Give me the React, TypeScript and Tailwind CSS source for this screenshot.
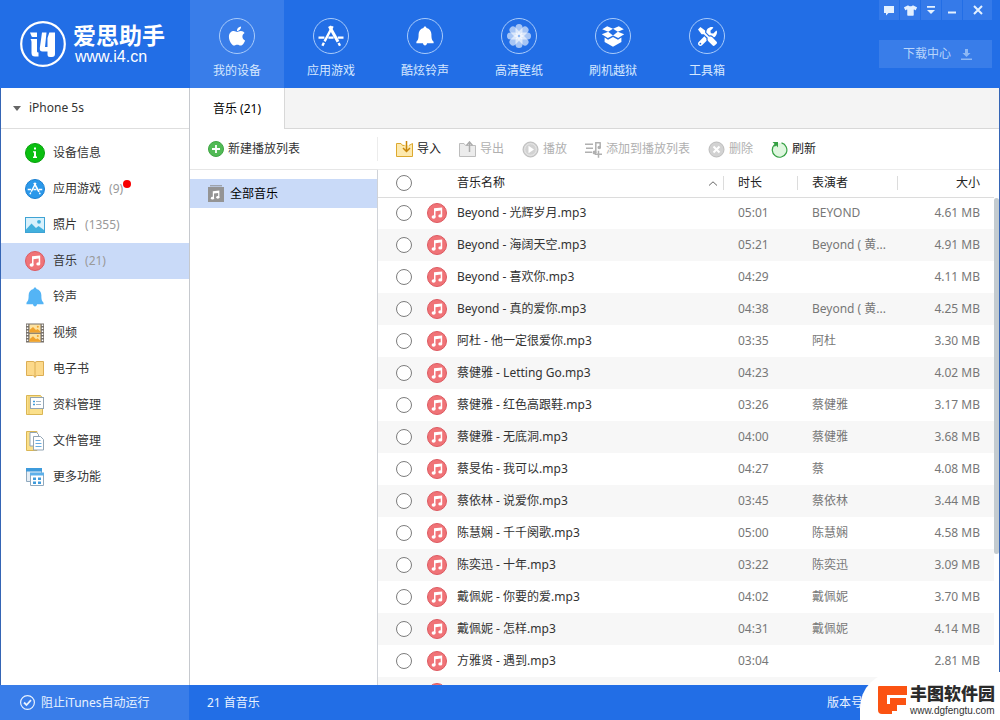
import React, { useState } from 'react';
import { FaApple, FaTools, FaTshirt } from 'react-icons/fa';

type Song = { name: string; time: string; artist: string; size: string };

const songs: Song[] = [
  { name: 'Beyond - 光辉岁月.mp3', time: '05:01', artist: 'BEYOND', size: '4.61 MB' },
  { name: 'Beyond - 海阔天空.mp3', time: '05:21', artist: 'Beyond ( 黄...', size: '4.91 MB' },
  { name: 'Beyond - 喜欢你.mp3', time: '04:29', artist: '', size: '4.11 MB' },
  { name: 'Beyond - 真的爱你.mp3', time: '04:38', artist: 'Beyond ( 黄...', size: '4.25 MB' },
  { name: '阿杜 - 他一定很爱你.mp3', time: '03:35', artist: '阿杜', size: '3.30 MB' },
  { name: '蔡健雅 - Letting Go.mp3', time: '04:23', artist: '', size: '4.02 MB' },
  { name: '蔡健雅 - 红色高跟鞋.mp3', time: '03:26', artist: '蔡健雅', size: '3.17 MB' },
  { name: '蔡健雅 - 无底洞.mp3', time: '04:00', artist: '蔡健雅', size: '3.68 MB' },
  { name: '蔡旻佑 - 我可以.mp3', time: '04:27', artist: '蔡', size: '4.08 MB' },
  { name: '蔡依林 - 说爱你.mp3', time: '03:45', artist: '蔡依林', size: '3.44 MB' },
  { name: '陈慧娴 - 千千阕歌.mp3', time: '05:00', artist: '陈慧娴', size: '4.58 MB' },
  { name: '陈奕迅 - 十年.mp3', time: '03:22', artist: '陈奕迅', size: '3.09 MB' },
  { name: '戴佩妮 - 你要的爱.mp3', time: '04:02', artist: '戴佩妮', size: '3.70 MB' },
  { name: '戴佩妮 - 怎样.mp3', time: '04:31', artist: '戴佩妮', size: '4.14 MB' },
  { name: '方雅贤 - 遇到.mp3', time: '03:04', artist: '', size: '2.81 MB' },
  { name: '', time: '', artist: '', size: '' },
];

/* ---------- Icons ---------- */

const AppStoreGlyph = () => (
  <g fill="none" stroke="currentColor" strokeWidth="2.4">
    <path d="M13.6 2.2 L5.6 17.4 M4.9 18.8 L3.4 21.8" />
    <path strokeWidth="3" d="M10.4 2.2 L19 17.8" />
    <path d="M19.6 19 L21 21.8" />
    <path d="M-0.5 13.6 H5.4 M9.4 13.6 H14.6 M18.8 13.6 H24.5" />
  </g>
);

const BellGlyph = () => (
  <path
    fill="currentColor"
    d="M12 1.5c1 0 1.6.7 1.6 1.7 3.4.8 5.4 3.4 5.4 7 0 4.8.5 6.3 2.4 8v1.8h-7.2c-.2 1.5-1 2.4-2.2 2.4s-2-.9-2.2-2.4H2.6v-1.8C4.5 16.5 5 15 5 10.200c0-3.600 2-6.200 5.400-7 0-1 .6-1.700 1.600-1.700z"
  />
);

const FlowerGlyph = () => (
  <g fill="#fff">
    {[0, 45, 90, 135, 180, 225, 270, 315].map((a) => (
      <rect key={a} x="8.500" y="0" width="7" height="11.500" rx="3.500" opacity="0.6" transform={`rotate(${a} 12 12)`} />
    ))}
    <circle cx="12" cy="12" r="1.200" fill="#8db8f5" />
  </g>
);

const BoxGlyph = () => (
  <g fill="currentColor">
    <path d="M6.200 2.200 12 4.700 7.200 7.800 1.200 5.200z" />
    <path d="M17.800 2.200 12 4.700 16.800 7.800 22.800 5.200z" />
    <path d="M7.200 7.800 12 11.600 6.800 14 .8 10.300z" />
    <path d="M16.800 7.800 12 11.600 17.200 14 23.200 10.300z" />
    <path d="M3.600 13.600 7 15.700 12 13 17 15.700 20.400 13.600V18L12 22.700 3.600 18z" />
  </g>
);

const NotePath = () => (
  <g fill="#fff">
    <path d="M7 5.300 15.200 4.500V12.800H13.700V7.600L8.500 8.200V14.200H7z" />
    <ellipse cx="6.600" cy="14" rx="2" ry="1.700" />
    <ellipse cx="13.300" cy="12.900" rx="2" ry="1.700" />
  </g>
);

const MusicIcon = () => (
  <svg viewBox="0 0 20 20" className="block size-5">
    <circle cx="10" cy="10" r="9.500" fill="#f07377" stroke="#dc5a61" />
    <NotePath />
  </svg>
);

const InfoIcon = () => (
  <svg viewBox="0 0 20 20" className="size-5">
    <circle cx="10" cy="10" r="9.500" fill="#0abf10" stroke="#07a10c" />
    <path fill="#fff" d="M9 4.500h2v2H9zM8 8.200h3v5.300h1V15H8v-1.500h1V9.500H8z" />
  </svg>
);

const AppsIcon = () => (
  <svg viewBox="0 0 20 20" className="size-5 text-white">
    <circle cx="10" cy="10" r="9.500" fill="#2b98ea" stroke="#1b7fd0" />
    <g transform="translate(3 2.600) scale(0.580)">
      <AppStoreGlyph />
    </g>
  </svg>
);

const PhotoIcon = () => (
  <svg viewBox="0 0 20 20" className="size-5">
    <rect x="0.500" y="2.500" width="19" height="15" fill="#d8f1fc" stroke="#3fa3d4" />
    <path d="M1 14.500 6.500 8.500 11 13 13.500 11 19 15V17H1z" fill="#42b0dd" />
    <circle cx="14" cy="6.800" r="1.900" fill="#42b0dd" />
  </svg>
);

const BellIcon = () => (
  <svg viewBox="1 1 22 22" className="size-5 text-[#54b4f5]">
    <BellGlyph />
  </svg>
);

const VideoIcon = () => (
  <svg viewBox="0 0 20 20" className="size-5">
    <rect x="1" y="0.500" width="18" height="19" fill="#77716a" />
    <path d="M2.500 1.500V19M17.500 1.500V19" stroke="#fff" strokeWidth="1.500" strokeDasharray="1.500 1.500" />
    <rect x="4.500" y="1.500" width="11" height="8" fill="#fde2a0" />
    <rect x="4.500" y="10.800" width="11" height="8" fill="#fde2a0" />
    <path d="M4.500 9.500V7L8 4l3 3 1.500-1 3 2.500v1z" fill="#f0a22c" />
    <path d="M4.500 18.800V16.300L8 13.300l3 3 1.500-1 3 2.500v1z" fill="#f0a22c" />
    <circle cx="12.800" cy="3.800" r="1" fill="#f0a22c" />
    <circle cx="12.800" cy="13" r="1" fill="#f0a22c" />
  </svg>
);

const BookIcon = () => (
  <svg viewBox="0 0 20 20" className="size-5" fill="#fcd98a" stroke="#dcae54">
    <path d="M1.500 2.500H8q2 0 2 1.500 0-1.500 2-1.500H18.500V16.500H12.500q-2.500 0-2.500 2 0-2-2.500-2H1.500z" />
    <path d="M10 4V17.500" />
  </svg>
);

const DataIcon = () => (
  <svg viewBox="0 0 20 20" className="size-5">
    <path d="M1.500.5H15.500L17.500 3V19.500H1.500z" fill="#fbe08b" stroke="#dab654" />
    <path d="M4 1V19" stroke="#e8c768" />
    <rect x="5.500" y="2.500" width="13" height="11" fill="#fff" stroke="#93a5b4" />
    <path d="M8 6.500h2M8 9.500h2" stroke="#3e9bdc" strokeWidth="1.500" />
    <path d="M11 6.500h5M11 9.500h5" stroke="#9fb4c5" />
  </svg>
);

const FileIcon = () => (
  <svg viewBox="0 0 20 20" className="size-5">
    <path d="M1.500.5H12V19.500H1.500z" fill="#fbe08b" stroke="#dab654" />
    <path d="M5 1.500h6.500l2 2V15H5z" fill="#fff" stroke="#93a5b4" />
    <path d="M8.500 5.500H15.500L18.500 8.500V19H8.500z" fill="#fff" stroke="#93a5b4" />
    <path d="M10.500 9.500h5M10.500 12.500h6M10.500 15.500h6" stroke="#67ace0" />
  </svg>
);

const MoreIcon = () => (
  <svg viewBox="0 0 20 20" className="size-5">
    <path d="M1.500 1.500h15v13h-15z" fill="#e6eef5" stroke="#8fa9be" />
    <path d="M1 1h16v3.500H1z" fill="#3e9bdc" />
    <path d="M5.500 6.500h13v12h-13z" fill="#fff" stroke="#8fa9be" />
    <path d="M5 5.500h14v3H5z" fill="#5db0ea" />
    <path d="M8 10.500h3v2.500H8zM13 10.500h3v2.500h-3zM8 14.500h3V17H8zM13 14.500h3V17h-3z" fill="#3e9bdc" />
  </svg>
);

const ImportIcon = () => (
  <svg viewBox="0 0 17 17" className="size-[17px]" fill="none">
    <path d="M.5 2.500H5l1.500 2H8.500M13 4.500l3.500-2V15.500H.5V2.500" fill="#fde9ae" stroke="#dda92f" />
    <path d="M10.500 0V10M7 7l3.500 3.500 3.500-3.500" stroke="#c8860a" strokeWidth="1.500" />
  </svg>
);

const ExportIcon = () => (
  <svg viewBox="0 0 17 17" className="size-[17px]" fill="none">
    <path d="M.5 2.500H5l1.500 2H16.500V15.500H.5z" fill="#ececec" stroke="#bdbdbd" />
    <path d="M10.500 11V2M7.500 4.500l3-3.500 3 3.500" stroke="#ababab" strokeWidth="1.500" />
  </svg>
);

const PlayIcon = () => (
  <svg viewBox="0 0 17 17" className="size-[17px]">
    <circle cx="8.500" cy="8.500" r="7.500" fill="#d2d2d2" stroke="#bcbcbc" />
    <circle cx="8.500" cy="8.500" r="5.800" fill="none" stroke="#e8e8e8" />
    <path d="M6.500 4.800 12 8.500 6.500 12.200z" fill="#fff" />
  </svg>
);

const AddToListIcon = () => (
  <svg viewBox="0 0 17 17" className="size-[17px]" fill="none" stroke="#b0b0b0" strokeWidth="1.500">
    <path d="M0 3.200h8M1 7.200h7M0 11.200h7M10.800 12V1.800h5M15.200 1.800v5.500M13.500 9.800v7M10 13.300h7" />
    <circle cx="9.500" cy="11.500" r="1.200" fill="#b0b0b0" />
    <circle cx="14.200" cy="6.500" r="1" fill="#b0b0b0" />
  </svg>
);

const DeleteIcon = () => (
  <svg viewBox="0 0 17 17" className="size-[17px]">
    <circle cx="8.500" cy="8.500" r="7.500" fill="#d2d2d2" stroke="#bcbcbc" />
    <path d="M5.500 5.500l6 6M11.500 5.500l-6 6" stroke="#fff" strokeWidth="2" />
  </svg>
);

const RefreshIcon = () => (
  <svg viewBox="0 0 17 17" className="size-[17px]" fill="none">
    <circle cx="8.500" cy="9" r="7" fill="#dff7df" />
    <path d="M10.500 1.900A7.300 7.300 0 1 1 3.600 3.600" stroke="#35a043" strokeWidth="1.200" />
    <path d="M1.500 1H7V6.500L5.200 4.600 3.800 5.800 2.600 4.500 3.600 3z" fill="#35a043" />
  </svg>
);

const PlusIcon = () => (
  <svg viewBox="0 0 16 16" className="size-4">
    <circle cx="8" cy="8" r="7.500" fill="#51ba55" stroke="#3fa544" />
    <path d="M8 4v8M4 8h8" stroke="#fff" strokeWidth="1.800" />
  </svg>
);

const AlbumIcon = () => (
  <svg viewBox="0 0 16 17" className="h-[17px] w-4">
    <path d="M2 .8H14" stroke="#8c8c8c" />
    <rect y="2" width="16" height="15" fill="#949494" />
    <g transform="translate(-0.800 2) scale(0.800)">
      <NotePath />
    </g>
  </svg>
);

const LogoMark = () => (
  <svg viewBox="0 0 46 46" className="size-[46px]" fill="#fff">
    <circle cx="23" cy="23" r="21.800" fill="none" stroke="#fff" strokeWidth="2.200" />
    <path d="M10 11.500h7v4.500h-4.500q-1 0-1.500-2z" />
    <path d="M10.500 18h6.500V30.500q0 1 1.500 1V35.500h-3.500q-3.500 0-3.500-3.500V21q0-1.500-1-3z" />
    <path d="M22 11.500h4.500L25 26h2.500V17l1.800-5.500H35V33q0 3-3 3h-2q-2.500 0-2.500-2.500V30.500h-5q-3 0-2.700-3.500z" />
  </svg>
);

/* ---------- Data for navigation ---------- */

const glyph = (node: React.ReactNode) => (
  <svg viewBox="0 0 24 24" className="size-6 overflow-visible">{node}</svg>
);

const topNav = [
  { label: '我的设备', icon: <FaApple size={22} /> },
  { label: '应用游戏', icon: glyph(<AppStoreGlyph />) },
  { label: '酷炫铃声', icon: <svg viewBox="0 0 24 24" className="size-[22px]"><BellGlyph /></svg> },
  { label: '高清壁纸', icon: glyph(<FlowerGlyph />) },
  { label: '刷机越狱', icon: glyph(<BoxGlyph />) },
  { label: '工具箱', icon: <FaTools size={19} /> },
];

const sideNav = [
  { label: '设备信息', icon: <InfoIcon /> },
  { label: '应用游戏', icon: <AppsIcon />, count: 9, dot: true },
  { label: '照片', icon: <PhotoIcon />, count: 1355 },
  { label: '音乐', icon: <MusicIcon />, count: 21 },
  { label: '铃声', icon: <BellIcon /> },
  { label: '视频', icon: <VideoIcon /> },
  { label: '电子书', icon: <BookIcon /> },
  { label: '资料管理', icon: <DataIcon /> },
  { label: '文件管理', icon: <FileIcon /> },
  { label: '更多功能', icon: <MoreIcon /> },
];

const tools = [
  { label: '导入', icon: <ImportIcon />, enabled: true },
  { label: '导出', icon: <ExportIcon />, enabled: false },
  { label: '播放', icon: <PlayIcon />, enabled: false },
  { label: '添加到播放列表', icon: <AddToListIcon />, enabled: false },
  { label: '删除', icon: <DeleteIcon />, enabled: false },
  { label: '刷新', icon: <RefreshIcon />, enabled: true },
];

const windowButtons = [
  { label: '反馈', icon: <path d="M1 2h10v7H5.500L3 11.500V9H1z" fill="currentColor" /> },
  { label: '皮肤', icon: null },
  { label: '菜单', icon: <path d="M2 2h8v1.800H2zM2 6h8L6 10z" fill="currentColor" /> },
  { label: '最小化', icon: <path d="M2 7.500h8v2H2z" fill="currentColor" /> },
  { label: '关闭', icon: <path d="M2 2l8 8M10 2l-8 8" stroke="currentColor" strokeWidth="2" /> },
];

/* ---------- Sections ---------- */

function Header() {
  const [active, setActive] = useState('我的设备');

  return (
    <header className="flex h-[88px] shrink-0 bg-[#226ee6] text-white">
      <a href="#home" className="flex w-[190px] shrink-0 items-center gap-[7px] pl-5">
        <LogoMark />
        <span className="flex flex-col">
          <span className="text-[23px] leading-[26px] font-bold">爱思助手</span>
          <span className="pl-0.5 font-['Liberation_Sans',sans-serif] text-base leading-[18px]">www.i4.cn</span>
        </span>
      </a>

      <nav className="flex">
        {topNav.map((item) => (
          <button
            key={item.label}
            onClick={() => setActive(item.label)}
            className={`flex w-[94px] flex-col items-center gap-2 pt-[18px] ${active === item.label ? 'bg-[#397de9]' : ''}`}
          >
            <span className="flex size-9 items-center justify-center rounded-full border border-[#a9cbfa]">
              {item.icon}
            </span>
            <span className="text-[#d6e8ff]">{item.label}</span>
          </button>
        ))}
      </nav>

      <div className="ml-auto flex w-[121px] flex-col gap-5 pr-2">
        <div className="flex gap-px text-[#e4f1ff]">
          {windowButtons.map((b) => (
            <button
              key={b.label}
              aria-label={b.label}
              className={`flex h-5 items-center justify-center bg-[#357ae9] ${b.label === '关闭' ? 'flex-1' : 'w-5'}`}
            >
              {b.icon ? <svg viewBox="0 0 12 12" className="size-3">{b.icon}</svg> : <FaTshirt size={13} />}
            </button>
          ))}
        </div>
        <button className="flex h-7 items-center justify-center gap-2.5 bg-[#397de9] pl-1 text-[#b9d5fb]">
          下载中心
          <svg viewBox="0 0 11 11" className="size-[11px]" fill="#8db8f5">
            <path d="M4 0h3v4h2.500L5.500 8 1.500 4H4zM0 9.500h11V11H0z" />
          </svg>
        </button>
      </div>
    </header>
  );
}

function Sidebar() {
  const [active, setActive] = useState('音乐');

  return (
    <aside className="flex w-[189px] shrink-0 flex-col border-r border-[#c6c9ce]">
      <button className="flex h-[41px] items-center gap-2 border-b border-[#dedede] pl-3 text-[#333]">
        <svg viewBox="0 0 8 5" className="h-[5px] w-2">
          <path d="M0 0h8L4 5z" fill="#666" />
        </svg>
        iPhone 5s
      </button>
      <nav className="flex flex-col pt-1.5">
        {sideNav.map((item) => (
          <button
            key={item.label}
            onClick={() => setActive(item.label)}
            className={`flex h-9 items-center gap-2 pl-6 ${active === item.label ? 'bg-[#c9daf8]' : ''}`}
          >
            {item.icon}
            <span>{item.label}</span>
            {item.count && (
              <span className="relative text-[#999]">
                ({item.count})
                {item.dot && <i className="absolute top-0 -right-2 size-2 rounded-full bg-[#f80000]" />}
              </span>
            )}
          </button>
        ))}
      </nav>
    </aside>
  );
}

function Playlists() {
  return (
    <div className="flex w-[188px] shrink-0 flex-col">
      <div className="flex h-[41px] items-center border-b border-[#e6e6e6]">
        <button className="flex flex-1 items-center gap-1 pl-[18px]">
          <PlusIcon />
          新建播放列表
        </button>
        <span className="h-6 w-px bg-[#ececec]" />
      </div>
      <div className="flex-1 border-r border-[#d0d3d8] pt-[9px]">
        <button className="flex h-[29px] w-full items-center gap-1.5 bg-[#c9daf8] pl-[18px] text-black">
          <AlbumIcon />
          全部音乐
        </button>
      </div>
    </div>
  );
}

const checkbox = 'block size-4 appearance-none rounded-full border border-[#7d7d7d] bg-white checked:bg-[#226ee6]';

function SongTable() {
  return (
    <div className="flex min-h-0 flex-1 overflow-hidden">
      <table className="w-full flex-1 table-fixed self-start text-left">
        <colgroup>
          <col className="w-11" />
          <col className="w-[35px]" />
          <col />
          <col className="w-[74px]" />
          <col className="w-[100px]" />
          <col className="w-[97px]" />
        </colgroup>
        <thead>
          <tr className="h-[27px] border-b border-[#dcdcdc] text-[#222] [&>th]:p-0 [&>th]:font-normal">
            <th>
              <input type="checkbox" aria-label="全选" className={`ml-[18px] ${checkbox}`} />
            </th>
            <th />
            <th>
              <span className="flex items-center justify-between pr-1.5">
                音乐名称
                <svg viewBox="0 0 8 5" className="h-[5px] w-2" fill="none">
                  <path d="M0 4.500 4 .8 8 4.500" stroke="#666" />
                </svg>
              </span>
            </th>
            <th>
              <span className="flex items-center gap-3.5">
                <i className="h-3.5 w-px bg-[#dcdcdc]" />
                时长
              </span>
            </th>
            <th>
              <span className="flex items-center gap-3.5">
                <i className="h-3.5 w-px bg-[#dcdcdc]" />
                表演者
              </span>
            </th>
            <th>
              <span className="flex items-center justify-between pr-3.5">
                <i className="h-3.5 w-px bg-[#dcdcdc]" />
                大小
              </span>
            </th>
          </tr>
        </thead>
        <tbody>
          {songs.map((song, i) => (
            <tr key={i} className="h-8 text-[#777] even:bg-[#f7f7f7] [&>td]:p-0">
              <td>
                <input type="checkbox" aria-label={song.name} className={`ml-[18px] ${checkbox}`} />
              </td>
              <td className="pl-[5px]!">
                <MusicIcon />
              </td>
              <td className="truncate text-[#333]">{song.name}</td>
              <td className="pl-[15px]!">{song.time}</td>
              <td className="truncate pl-[15px]!">{song.artist}</td>
              <td className="pr-3.5! text-right">{song.size}</td>
            </tr>
          ))}
        </tbody>
      </table>
      <div className="w-[5px] shrink-0 pt-7">
        <div className="h-[73%] rounded-full bg-[#c3cbd0]" />
      </div>
    </div>
  );
}

export default function App() {
  return (
    <div className="relative flex h-screen flex-col overflow-hidden bg-white font-['Noto_Sans','Noto_Sans_CJK_SC',sans-serif] text-xs leading-[18px] text-[#333]">
      <Header />

      <div className="flex min-h-0 flex-1 border-x border-[#3565b5]">
        <Sidebar />
        <main className="flex min-w-0 flex-1 flex-col">
          <div className="flex h-[41px] shrink-0">
            <button className="w-[94px] text-black">音乐 (21)</button>
            <div className="flex-1 border-b border-l border-[#d8d8d8] bg-[#f4f4f4]" />
          </div>
          <div className="flex min-h-0 flex-1">
            <Playlists />
            <section className="flex min-w-0 flex-1 flex-col">
              <div className="flex h-[41px] shrink-0 items-center gap-[18px] border-b border-[#ececec] pl-[18px]">
                {tools.map((t) => (
                  <button
                    key={t.label}
                    disabled={!t.enabled}
                    className={`flex items-center gap-1 ${t.enabled ? 'text-[#222]' : 'text-[#b0b0b0]'}`}
                  >
                    {t.icon}
                    {t.label}
                  </button>
                ))}
              </div>
              <SongTable />
            </section>
          </div>
        </main>
      </div>

      <footer className="flex h-[35px] shrink-0 items-center bg-[#226ee6] text-[#e8f2ff]">
        <button className="flex h-full w-[189px] shrink-0 items-center gap-1.5 bg-[#397de9] pl-5">
          <svg viewBox="0 0 15 15" className="size-[15px]" fill="none" stroke="currentColor">
            <circle cx="7.500" cy="7.500" r="6.900" strokeWidth="1.200" />
            <path d="M4 7.500l2.500 2.500L11 5.200" strokeWidth="1.800" />
          </svg>
          阻止iTunes自动运行
        </button>
        <span className="pl-[18px]">21 首音乐</span>
        <span className="ml-auto pr-[137px]">版本号</span>
      </footer>

      {/* Site badge over the bottom right corner */}
      <div className="absolute right-0 bottom-0 flex h-12 w-[140px] items-center gap-0.5 rounded-tl-[36px] bg-white pt-2 pl-[18px]">
        <svg viewBox="0 0 30 28" className="h-7 w-[30px] shrink-0">
          <path d="M1 0H29V9H9V18H14V28H4Q0 28 0 24V1Q0 0 1 0z" fill="#fb5312" />
          <path d="M12 12H28V19H19V25H12z" fill="#fb5312" />
        </svg>
        <div className="flex flex-col">
          <span className="text-[17px] leading-[22px] font-black whitespace-nowrap text-[#2b2b2b]">丰图软件园</span>
          <span className="font-['Liberation_Sans',sans-serif] text-[10px] leading-3 text-[#333]">www.dgfengtu.com</span>
        </div>
      </div>
    </div>
  );
}
